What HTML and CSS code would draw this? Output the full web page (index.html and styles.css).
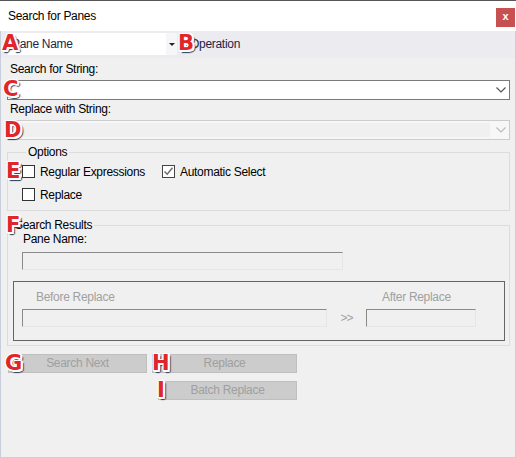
FILE: index.html
```html
<!DOCTYPE html>
<html>
<head>
<meta charset="utf-8">
<link rel="stylesheet" href="styles.css">
</head>
<body>
<div class="window">
  <div class="titlebar">
    <span class="title">Search for Panes</span>
    <span class="close">x</span>
  </div>
  <div class="client">
    <div class="toolbar">
      <div class="panecombo">
        <span class="panecombo-text">Pane Name</span>
        <span class="panecombo-btn"><span class="tri"></span></span>
      </div>
      <span class="op">Operation</span>
    </div>
    <div class="content">
      <div class="lbl">Search for String:</div>
      <div class="combo">
        <svg class="chev" width="10" height="6" viewBox="0 0 10 6"><path d="M0.5 0.5 L5 5 L9.5 0.5" fill="none" stroke="#555" stroke-width="1.2"/></svg>
      </div>
      <div class="lbl lbl2">Replace with String:</div>
      <div class="combo combo-dis">
        <div class="combo-dis-field"></div>
        <svg class="chev" width="10" height="6" viewBox="0 0 10 6"><path d="M0.5 0.5 L5 5 L9.5 0.5" fill="none" stroke="#bcbcbc" stroke-width="1.2"/></svg>
      </div>
      <fieldset class="group options">
        <legend>Options</legend>
        <div class="row">
          <div class="chk chk-first"><span class="box"></span><span class="chk-lbl">Regular Expressions</span></div>
          <div class="chk"><span class="box checked"><svg width="11" height="11" viewBox="0 0 11 11"><path d="M1.5 5.5 L4.2 8.3 L9.5 1.8" fill="none" stroke="#6a6a6a" stroke-width="1.4"/></svg></span><span class="chk-lbl">Automatic Select</span></div>
        </div>
        <div class="row row2">
          <div class="chk"><span class="box"></span><span class="chk-lbl">Replace</span></div>
        </div>
      </fieldset>
      <fieldset class="group results">
        <legend>Search Results</legend>
        <div class="res-lbl">Pane Name:</div>
        <div class="field pane-field"></div>
        <div class="inner">
          <div class="inner-lbls">
            <span class="before-lbl">Before Replace</span>
            <span class="after-lbl">After Replace</span>
          </div>
          <div class="inner-fields">
            <div class="field before-field"></div>
            <span class="arrows">&gt;&gt;</span>
            <div class="field after-field"></div>
          </div>
        </div>
      </fieldset>
      <div class="btnrow">
        <div class="btn btn-next">Search Next</div>
        <div class="btn btn-replace">Replace</div>
      </div>
      <div class="btnrow btnrow2">
        <div class="btn btn-batch">Batch Replace</div>
      </div>
    </div>
  </div>

  <span class="badge badge-a">A</span>
  <span class="badge badge-b">B</span>
  <span class="badge badge-c">C</span>
  <span class="badge badge-d">D</span>
  <span class="badge badge-e">E</span>
  <span class="badge badge-f">F</span>
  <span class="badge badge-g">G</span>
  <span class="badge badge-h">H</span>
  <span class="badge badge-i">I</span>
</div>
</body>
</html>
```

FILE: styles.css
```css
html, body {
  margin: 0;
  padding: 0;
}
body {
  width: 516px;
  height: 458px;
  overflow: hidden;
  background: #f0f0f0;
  font-family: "Liberation Sans", Arial, sans-serif;
  font-size: 12px;
  letter-spacing: -0.3px;
  color: #000;
}
.window {
  position: relative;
  width: 516px;
  height: 458px;
  display: flex;
  flex-direction: column;
}
.titlebar {
  height: 31px;
  box-sizing: border-box;
  border-top: 1px solid #555;
  background: #fff;
  display: flex;
  align-items: center;
  padding-left: 8px;
}
.title {
  font-size: 12px;
  color: #000;
}
.close {
  margin-left: auto;
  margin-right: 1px;
  align-self: flex-start;
  margin-top: 7px;
  width: 19px;
  height: 19px;
  background: #c75050;
  color: #fff;
  font-weight: bold;
  font-size: 11px;
  line-height: 17px;
  text-align: center;
  letter-spacing: 0;
}
.client {
  flex: 1;
  display: flex;
  flex-direction: column;
  border: 1px solid #c9cedc;
  border-top: none;
}
.toolbar {
  height: 27px;
  background: #ececf0;
  display: flex;
  align-items: flex-start;
}
.panecombo {
  margin: 2px 0 0 7px;
  width: 169px;
  height: 22px;
  background: #fff;
  display: flex;
  align-items: center;
}
.panecombo-text {
  flex: 1;
  padding-left: 4px;
  color: #1e1e4a;
}
.panecombo-btn {
  width: 11px;
  height: 22px;
  background: #f6f6f8;
  display: flex;
  align-items: center;
  justify-content: center;
}
.tri {
  width: 0;
  height: 0;
  border-left: 3px solid transparent;
  border-right: 3px solid transparent;
  border-top: 3px solid #222;
}
.op {
  margin: 2px 0 0 13px;
  line-height: 22px;
  color: #1e1e4a;
}
.content {
  padding: 0 5px 0 6px;
}
.lbl {
  height: 14px;
  line-height: 14px;
  padding-left: 3px;
  margin-top: 4px;
}
.lbl2 {
  margin-top: 2px;
}
.combo {
  height: 20px;
  box-sizing: border-box;
  border: 1px solid #7a7a7a;
  background: #fff;
  margin-top: 4px;
  display: flex;
  justify-content: flex-end;
  align-items: center;
  padding-right: 3px;
}
.combo-dis {
  border-color: #cccccc;
  background: #f7f7f7;
  padding: 0 3px 0 0;
}
.combo-dis-field {
  flex: 1;
  height: 14px;
  background: #f0f0f0;
  margin-right: 6px;
}
.group {
  margin: 5px 0 0;
  padding: 0;
  border: 1px solid #dcdcdc;
  min-width: 0;
}
.group legend {
  margin-left: 4px;
  padding: 0 2px 0 2px;
  line-height: 14px;
  height: 14px;
}
.options {
  padding: 6px 0 9px 14px;
}
.row {
  display: flex;
  align-items: center;
  height: 13px;
}
.row2 {
  margin-top: 10px;
}
.chk {
  display: flex;
  align-items: center;
}
.chk-first {
  width: 140px;
}
.box {
  width: 13px;
  height: 13px;
  box-sizing: border-box;
  border: 1px solid #333;
  background: #fff;
  display: flex;
  align-items: center;
  justify-content: center;
}
.box.checked {
  border-color: #444;
}
.chk-lbl {
  margin-left: 5px;
  line-height: 14px;
}
.results {
  margin-top: 7px;
  padding: 0 0 4px 0;
}
.results legend {
  margin-left: 5px;
}
.res-lbl {
  padding-left: 15px;
  line-height: 14px;
  height: 14px;
}
.field {
  height: 18px;
  box-sizing: border-box;
  border-top: 1px solid #8a8a8a;
  border-left: 1px solid #8a8a8a;
  border-right: 1px solid #e6e6e6;
  border-bottom: 1px solid #e6e6e6;
  background: #f0f0f0;
}
.pane-field {
  margin: 6px 0 0 14px;
  width: 321px;
}
.inner {
  margin: 11px 0 0 5px;
  width: 492px;
  box-sizing: border-box;
  border: 1px solid #646464;
  padding: 8px 0 13px 8px;
}
.inner-lbls {
  display: flex;
  height: 14px;
  line-height: 14px;
  color: #a0a0a0;
}
.before-lbl {
  margin-left: 14px;
  width: 346px;
}
.inner-fields {
  display: flex;
  align-items: center;
  margin-top: 5px;
}
.before-field {
  width: 305px;
}
.arrows {
  width: 39px;
  text-align: center;
  color: #a0a0a0;
  letter-spacing: -1px;
}
.after-field {
  width: 110px;
}
.btnrow {
  display: flex;
  margin-top: 8px;
  padding-left: 1px;
}
.btn {
  height: 19px;
  box-sizing: border-box;
  border: 1px solid #bfbfbf;
  background: #cccccc;
  color: #a0a0a0;
  text-align: center;
  line-height: 17px;
}
.btn-next {
  width: 139px;
}
.btn-replace {
  width: 145px;
  margin-left: 5px;
}
.btnrow2 {
  padding-left: 151px;
}
.btn-batch {
  width: 139px;
}
.badge {
  position: absolute;
  font-family: "DejaVu Sans", sans-serif;
  font-weight: bold;
  font-size: 21px;
  line-height: 21px;
  letter-spacing: 0;
  color: #e0262a;
  text-shadow:
    1px 0 0 #fff, -1px 0 0 #fff, 0 1px 0 #fff, 0 -1px 0 #fff,
    1px 1px 0 #fff, -1px -1px 0 #fff, 1px -1px 0 #fff, -1px 1px 0 #fff,
    2px 0 0 #fff, 0 2px 0 #fff, 2px 2px 0 #fff,
    2px 3px 1px #2c3a55, 3px 2px 1px #2c3a55;
}
.badge-a { left: 2px; top: 33px; }
.badge-b { left: 178px; top: 33px; }
.badge-c { left: 3px; top: 79px; }
.badge-d { left: 4px; top: 120px; }
.badge-e { left: 6px; top: 161px; }
.badge-f { left: 6px; top: 215px; }
.badge-g { left: 5px; top: 353px; }
.badge-h { left: 152px; top: 353px; }
.badge-i { left: 157px; top: 380px; }
```
